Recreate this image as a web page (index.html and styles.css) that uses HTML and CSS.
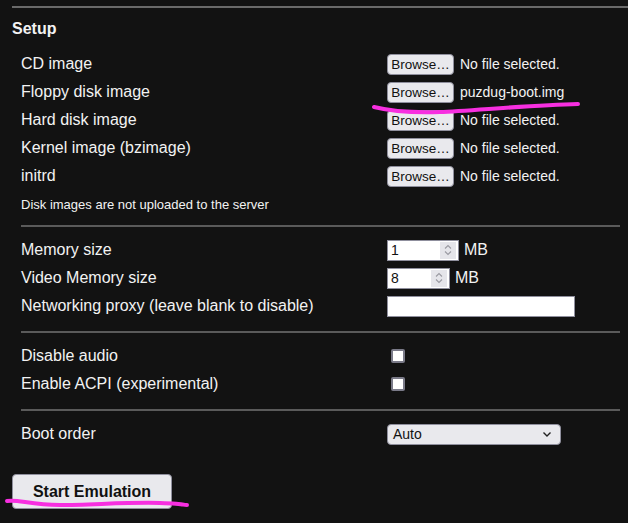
FILE: index.html
```html
<!DOCTYPE html>
<html>
<head>
<meta charset="utf-8">
<link rel="stylesheet" href="styles.css">
</head>
<body>
<div class="page">
  <div class="topline"></div>
  <h2 class="title">Setup</h2>
  <div class="section files">
    <div class="row"><span class="label">CD image</span><span class="ctrl"><span class="btn">Browse…</span><span class="fname">No file selected.</span></span></div>
    <div class="row"><span class="label">Floppy disk image</span><span class="ctrl"><span class="btn">Browse…</span><span class="fname">puzdug-boot.img</span></span></div>
    <div class="row"><span class="label">Hard disk image</span><span class="ctrl"><span class="btn">Browse…</span><span class="fname">No file selected.</span></span></div>
    <div class="row"><span class="label">Kernel image (bzimage)</span><span class="ctrl"><span class="btn">Browse…</span><span class="fname">No file selected.</span></span></div>
    <div class="row"><span class="label">initrd</span><span class="ctrl"><span class="btn">Browse…</span><span class="fname">No file selected.</span></span></div>
    <div class="note">Disk images are not uploaded to the server</div>
  </div>
  <div class="sep"></div>
  <div class="section">
    <div class="row"><span class="label">Memory size</span><span class="ctrl"><span class="num w72"><span class="val">1</span><span class="spin"><svg width="10" height="14" viewBox="0 0 10 14"><path d="M2 5.5 L5 2.5 L8 5.5 M2 8.5 L5 11.5 L8 8.5" fill="none" stroke="#9a9aa2" stroke-width="1.1"/></svg></span></span><span class="unit">MB</span></span></div>
    <div class="row"><span class="label">Video Memory size</span><span class="ctrl"><span class="num w63"><span class="val">8</span><span class="spin"><svg width="10" height="14" viewBox="0 0 10 14"><path d="M2 5.5 L5 2.5 L8 5.5 M2 8.5 L5 11.5 L8 8.5" fill="none" stroke="#9a9aa2" stroke-width="1.1"/></svg></span></span><span class="unit">MB</span></span></div>
    <div class="row"><span class="label">Networking proxy (leave blank to disable)</span><span class="ctrl"><span class="text-in"></span></span></div>
  </div>
  <div class="sep"></div>
  <div class="section">
    <div class="row"><span class="label">Disable audio</span><span class="ctrl"><span class="check"></span></span></div>
    <div class="row"><span class="label">Enable ACPI (experimental)</span><span class="ctrl"><span class="check"></span></span></div>
  </div>
  <div class="sep"></div>
  <div class="section">
    <div class="row"><span class="label">Boot order</span><span class="ctrl"><span class="select"><span>Auto</span><svg width="10" height="7" viewBox="0 0 10 7"><path d="M1.5 1.5 L5 5 L8.5 1.5" fill="none" stroke="#222" stroke-width="1.4"/></svg></span></span></div>
  </div>
  <div class="start">Start Emulation</div>
</div>
<svg class="marks" width="628" height="523" viewBox="0 0 628 523">
  <path d="M374 107 C 390 111, 410 113, 440 112 S 530 105, 578 104" fill="none" stroke="#f72fe0" stroke-width="4" stroke-linecap="round"/>
  <path d="M7 501 C 18 499, 30 505, 60 505 S 130 502, 160 503 S 180 505, 187 505" fill="none" stroke="#f72fe0" stroke-width="4" stroke-linecap="round"/>
</svg>
</body>
</html>
```

FILE: styles.css
```css
html, body {
  margin: 0;
  padding: 0;
  background: #121212;
}
body {
  width: 628px;
  height: 523px;
  overflow: hidden;
  position: relative;
  font-family: "Liberation Sans", Arial, sans-serif;
  color: #f2f2f2;
}
.page {
  display: flex;
  flex-direction: column;
  padding-left: 12px;
  padding-top: 6px;
}
.topline {
  height: 2px;
  background: #6a6a6a;
}
.title {
  margin: 11px 0 0 0;
  font-size: 16px;
  font-weight: bold;
  line-height: 20px;
  height: 21px;
}
.section {
  display: flex;
  flex-direction: column;
  padding-left: 9px;
}
.files {
  margin-top: 10px;
}
.row {
  display: grid;
  grid-template-columns: 366px auto;
  height: 28px;
  align-items: center;
  font-size: 16px;
}
.label {
  line-height: 18px;
}
.ctrl {
  display: flex;
  align-items: center;
  gap: 6px;
}
.btn {
  box-sizing: border-box;
  width: 67px;
  height: 21px;
  background: #e9e9ed;
  border: 1px solid #8f8f9d;
  border-radius: 4px;
  color: #111;
  font-size: 13.5px;
  display: flex;
  align-items: center;
  justify-content: center;
  white-space: nowrap;
  overflow: hidden;
}
.fname {
  font-size: 14px;
}
.note {
  font-size: 13px;
  height: 15px;
  line-height: 15px;
  margin-top: 7px;
}
.sep {
  height: 2px;
  background: #5a5a5a;
  margin: 13px 8px 9px 9px;
}
.section + .sep {
  margin-top: 11px;
}
.files + .sep {
  margin-top: 13px;
}
.num {
  box-sizing: border-box;
  height: 21px;
  background: #fff;
  border: 1px solid #8f8f9d;
  display: flex;
  align-items: center;
  justify-content: space-between;
  color: #111;
  font-size: 14px;
  padding-left: 3px;
}
.w72 { width: 72px; }
.w63 { width: 63px; }
.spin {
  width: 16px;
  height: 17px;
  margin-right: 2px;
  background: #e5e5ea;
  display: flex;
  align-items: center;
  justify-content: center;
}
.unit {
  font-size: 16px;
  margin-left: -1px;
}
.text-in {
  box-sizing: border-box;
  width: 188px;
  height: 21px;
  background: #fff;
  border: 1px solid #8f8f9d;
}
.check {
  box-sizing: border-box;
  width: 14px;
  height: 14px;
  margin-left: 4px;
  background: #fff;
  border: 2px solid #7a7a88;
  border-radius: 2px;
}
.select {
  box-sizing: border-box;
  width: 174px;
  height: 21px;
  background: #e9e9ed;
  border: 1px solid #8f8f9d;
  border-radius: 4px;
  color: #111;
  font-size: 14px;
  display: flex;
  align-items: center;
  justify-content: space-between;
  padding: 0 8px 0 5px;
}
.start {
  box-sizing: border-box;
  width: 160px;
  height: 35px;
  margin-top: 26px;
  background: #e9e9ed;
  border: 1px solid #8f8f9d;
  border-radius: 4px;
  color: #111;
  font-size: 16px;
  font-weight: bold;
  display: flex;
  align-items: center;
  justify-content: center;
}
.marks {
  position: absolute;
  left: 0;
  top: 0;
  pointer-events: none;
}
```
